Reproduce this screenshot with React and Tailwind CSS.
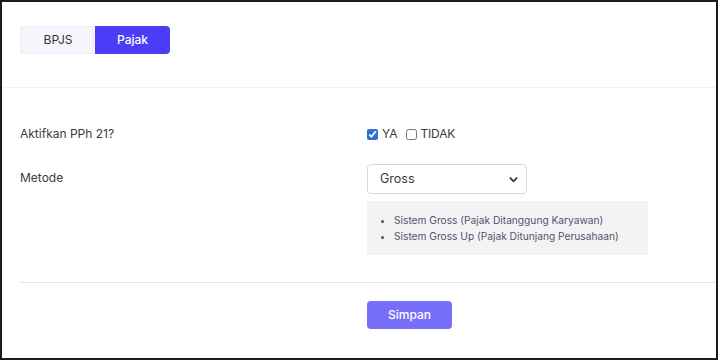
import { useState } from 'react'

const METODE = ['Gross', 'Gross Up']

export default function App() {
  const [tab, setTab] = useState('pajak')
  const [aktif, setAktif] = useState('ya')
  const [metode, setMetode] = useState(METODE[0])

  return (
    <div className="w-[720px] h-[362px] bg-white" style={{ fontFamily: 'Inter, "Noto Sans", sans-serif' }}>
      <div className="w-[718px] h-[360px] border-2 border-[#1c1c1c] flex flex-col">
        {/* Tabs */}
        <div className="h-[86px] pl-[18px] pt-[24px] border-b border-[#edf1f7]">
          <div className="flex">
            <button
              onClick={() => setTab('bpjs')}
              className={`w-[75px] h-[28px] text-[12px] rounded-l-[4px] ${
                tab === 'bpjs' ? 'bg-[#4a3cf7] text-white' : 'bg-[#f6f5fd] text-[#333] border border-r-0 border-[#eceaf8]'
              }`}
            >
              BPJS
            </button>
            <button
              onClick={() => setTab('pajak')}
              className={`w-[75px] h-[28px] text-[12px] font-medium rounded-r-[4px] ${
                tab === 'pajak' ? 'bg-[#4a3cf7] text-white' : 'bg-[#f6f5fd] text-[#333] border border-l-0 border-[#eceaf8]'
              }`}
            >
              Pajak
            </button>
          </div>
        </div>

        {/* Form */}
        <div className="pl-[18px] text-[12px] text-[#3b3b3b]">
          <div className="flex mt-[36px] h-[20px] items-center">
            <div className="w-[347px]">Aktifkan PPh 21?</div>
            <label className="flex items-center gap-[4px] cursor-pointer">
              <input
                type="checkbox"
                checked={aktif === 'ya'}
                onChange={() => setAktif('ya')}
                className="w-[11px] h-[11px] m-0 accent-[#2f6fd6]"
              />
              <span>YA</span>
            </label>
            <label className="flex items-center gap-[4px] ml-[8px] cursor-pointer">
              <input
                type="checkbox"
                checked={aktif === 'tidak'}
                onChange={() => setAktif('tidak')}
                className="w-[11px] h-[11px] m-0 accent-[#2f6fd6]"
              />
              <span className="tracking-[-0.2px]">TIDAK</span>
            </label>
          </div>

          <div className="flex mt-[20px]">
            <div className="w-[347px] pt-[5px]">Metode</div>
            <div>
              <div className="relative w-[160px] h-[30px]">
                <select
                  value={metode}
                  onChange={(e) => setMetode(e.target.value)}
                  className="appearance-none w-full h-full border border-[#d8d6de] rounded-[4px] bg-white pl-[12px] text-[12.5px] text-[#3b3b3b] outline-none"
                >
                  {METODE.map((m) => (
                    <option key={m}>{m}</option>
                  ))}
                </select>
                <svg className="absolute right-[9px] top-[12px] w-[9px] h-[7px] pointer-events-none" viewBox="0 0 10 7" fill="none" stroke="#333" strokeWidth="2">
                  <path d="M1 1.5l4 4 4-4" />
                </svg>
              </div>
              <div className="mt-[7px] w-[281px] h-[54px] bg-[#f3f3f3] pt-[11px] pl-[27px]">
                <ul className="list-disc text-[10.2px] leading-[16px] text-[#55526b]">
                  <li>Sistem Gross (Pajak Ditanggung Karyawan)</li>
                  <li>Sistem Gross Up (Pajak Ditunjang Perusahaan)</li>
                </ul>
              </div>
            </div>
          </div>

          <div className="mt-[27px] border-t border-[#e6e6e6]" />

          <div className="pl-[347px] mt-[18px]">
            <button className="w-[85px] h-[28px] rounded-[4px] bg-[#776ef9] text-white text-[12px] font-medium">
              Simpan
            </button>
          </div>
        </div>
      </div>
    </div>
  )
}
